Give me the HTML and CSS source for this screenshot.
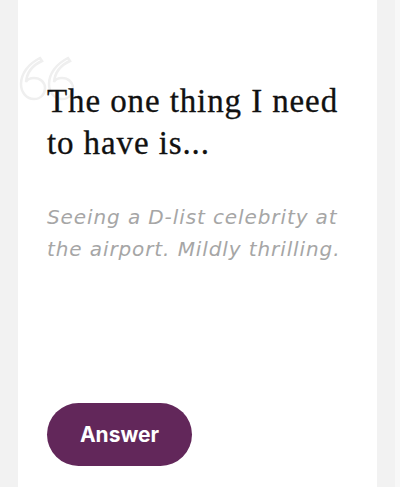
FILE: index.html
```html
<!DOCTYPE html>
<html lang="en">
<head>
    <meta charset="UTF-8">
    <meta name="viewport" content="width=device-width, initial-scale=1.0">
    <title>Prompt Card</title>
    <link rel="stylesheet" href="styles.css">
</head>
<body>
    <div class="page">
        <div class="card">
            <div class="quote-mark">
                <svg width="56" height="46" viewBox="0 0 56 46">
                    <path d="M22 2 C10 8 3 18 3 28 C3 37 9 43 16 43 C23 43 27 38 27 32 C27 26 22 22 16 22 C12 22 9 24 8 26 C9 16 15 9 24 5 Z" fill="none" stroke="#efefef" stroke-width="2.5"/>
                    <path d="M50 2 C38 8 31 18 31 28 C31 37 37 43 44 43 C51 43 55 38 55 32 C55 26 50 22 44 22 C40 22 37 24 36 26 C37 16 43 9 52 5 Z" fill="none" stroke="#efefef" stroke-width="2.5"/>
                </svg>
            </div>
            <h1 class="prompt">The one thing I need to have is...</h1>
            <p class="answer-text">Seeing a D-list celebrity at the airport. Mildly thrilling.</p>
            <button class="answer-btn">Answer</button>
        </div>
    </div>
</body>
</html>
```

FILE: styles.css
```css
body {
    margin: 0;
    background-color: #f2f2f2;
    font-family: "Liberation Sans", Arial, sans-serif;
}
.page {
    padding: 0 18px 0 18px;
    border-right: 5px solid #f8f8f8;
    height: 487px;
    box-sizing: border-box;
}
.card {
    position: relative;
    background-color: #fff;
    height: 100%;
    padding: 80px 28px 21px 29px;
    box-sizing: border-box;
    display: flex;
    flex-direction: column;
    align-items: flex-start;
}
.quote-mark {
    position: absolute;
    left: 0;
    top: 56px;
}
.prompt {
    position: relative;
    margin: 0;
    font-family: "Liberation Serif", "Times New Roman", serif;
    font-weight: normal;
    font-size: 33px;
    line-height: 42px;
    letter-spacing: 0.9px;
    color: #111;
    -webkit-text-stroke: 0.3px #111;
}
.answer-text {
    margin: 37px 0 0 0;
    font-family: "DejaVu Sans", "Liberation Sans", sans-serif;
    font-style: italic;
    font-weight: 300;
    font-size: 20px;
    line-height: 32px;
    letter-spacing: 0.9px;
    color: #a6a6a6;
}
.answer-btn {
    margin-top: auto;
    background-color: #62275a;
    color: #fff;
    border: none;
    border-radius: 32px;
    width: 145px;
    height: 63px;
    font-family: Inter, "Liberation Sans", sans-serif;
    font-weight: 700;
    font-size: 21px;
    cursor: pointer;
}
```
